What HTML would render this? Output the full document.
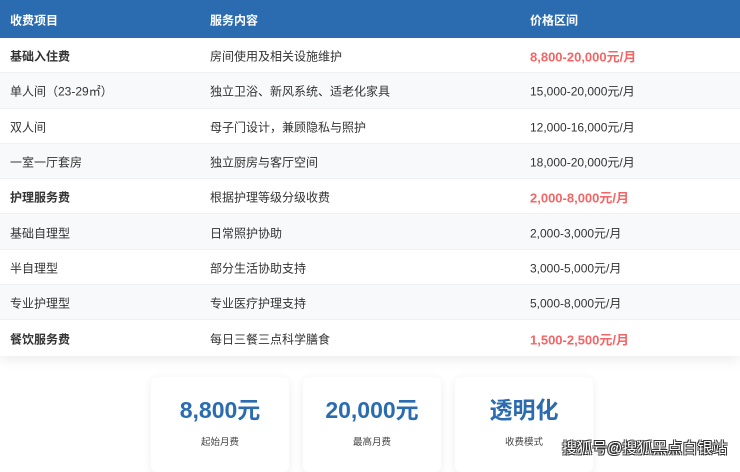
<!DOCTYPE html>
<html><head><meta charset="utf-8"><style>
body{margin:0;width:740px;height:463px;overflow:hidden;background:#fff;font-family:"Liberation Sans","Noto Sans CJK SC",sans-serif;position:relative}
.tbl{position:absolute;left:0;top:0;width:740px;box-shadow:0 4px 12px rgba(0,0,0,.08);background:#fff}
.hd{height:38px;background:#2b6cb1;color:#fff;font-weight:bold;font-size:12px;position:relative}
.row{height:35.3px;position:relative;font-size:12px;color:#333;border-bottom:1px solid #eef0f3;box-sizing:border-box}
.c1,.c2,.c3{position:absolute;top:50%;transform:translateY(-45%);white-space:nowrap}
.c1{left:10px}.c2{left:210px}.c3{left:530px}
.b .c1{font-weight:bold}
.b .c3{color:#f56565;font-weight:bold;font-size:13px}
.card{position:absolute;top:377px;width:138px;height:95px;background:#fff;border-radius:6px;box-shadow:0 2px 10px rgba(0,0,0,.07);text-align:center}
.card .v{margin-top:18px;font-size:23px;font-weight:bold;color:#2b6cb1;line-height:30px}
.card .l{margin-top:9px;font-size:9.5px;color:#444}
.wm{position:absolute;left:562px;top:437px;font-size:15px;color:#fff;text-shadow:-1px -1px 0 #333,1px -1px 0 #333,-1px 1px 0 #333,1px 1px 0 #333}
</style></head><body>
<div class="tbl">
<div class="hd"><span class="c1">收费项目</span><span class="c2">服务内容</span><span class="c3">价格区间</span></div>
<div>
<div class="row b" style="background:#fff"><span class="c1">基础入住费</span><span class="c2">房间使用及相关设施维护</span><span class="c3">8,800-20,000元/月</span></div>
<div class="row" style="background:#f7f9fb"><span class="c1">单人间（23-29㎡）</span><span class="c2">独立卫浴、新风系统、适老化家具</span><span class="c3">15,000-20,000元/月</span></div>
<div class="row" style="background:#fff"><span class="c1">双人间</span><span class="c2">母子门设计，兼顾隐私与照护</span><span class="c3">12,000-16,000元/月</span></div>
<div class="row" style="background:#f7f9fb"><span class="c1">一室一厅套房</span><span class="c2">独立厨房与客厅空间</span><span class="c3">18,000-20,000元/月</span></div>
<div class="row b" style="background:#fff"><span class="c1">护理服务费</span><span class="c2">根据护理等级分级收费</span><span class="c3">2,000-8,000元/月</span></div>
<div class="row" style="background:#f7f9fb"><span class="c1">基础自理型</span><span class="c2">日常照护协助</span><span class="c3">2,000-3,000元/月</span></div>
<div class="row" style="background:#fff"><span class="c1">半自理型</span><span class="c2">部分生活协助支持</span><span class="c3">3,000-5,000元/月</span></div>
<div class="row" style="background:#f7f9fb"><span class="c1">专业护理型</span><span class="c2">专业医疗护理支持</span><span class="c3">5,000-8,000元/月</span></div>
<div class="row b" style="background:#fff;border-bottom:none"><span class="c1">餐饮服务费</span><span class="c2">每日三餐三点科学膳食</span><span class="c3">1,500-2,500元/月</span></div>
</div></div>
<div class="card" style="left:151px"><div class="v">8,800元</div><div class="l">起始月费</div></div>
<div class="card" style="left:303px"><div class="v">20,000元</div><div class="l">最高月费</div></div>
<div class="card" style="left:455px"><div class="v">透明化</div><div class="l">收费模式</div></div>
<div class="wm">搜狐号@搜狐黑点白银站</div>
</body></html>
